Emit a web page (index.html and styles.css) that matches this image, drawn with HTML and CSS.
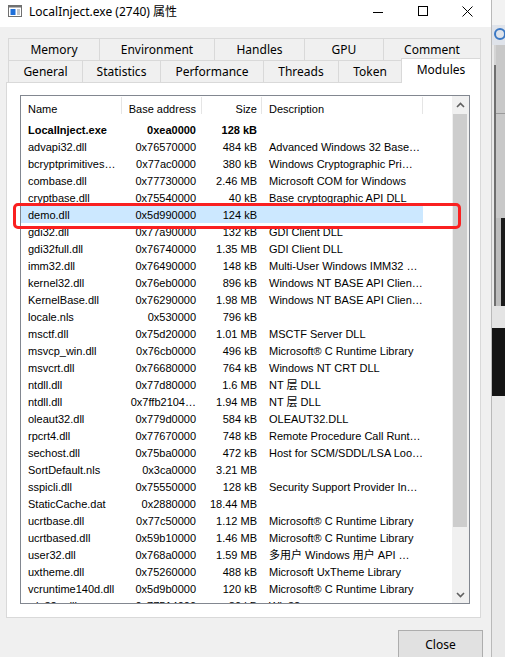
FILE: index.html
```html
<!DOCTYPE html>
<html>
<head>
<meta charset="utf-8">
<title>LocalInject.exe (2740) 属性</title>
<link rel="stylesheet" href="styles.css">
</head>
<body>
<div class="window">
  <div class="titlebar">
    <svg class="app-icon" width="14" height="12" viewBox="0 0 14 12">
      <rect x="0.5" y="0.5" width="13" height="11" fill="#fff" stroke="#707070"/>
      <rect x="1" y="1" width="12" height="1.5" fill="#707070"/>
      <rect x="2.5" y="4" width="5" height="6" fill="#1e6fd9"/>
      <line x1="9" y1="5" x2="12" y2="5" stroke="#8a8a8a"/>
      <line x1="9" y1="7" x2="12" y2="7" stroke="#8a8a8a"/>
      <line x1="9" y1="9" x2="12" y2="9" stroke="#8a8a8a"/>
    </svg>
    <div class="title">LocalInject.exe (2740) 属性</div>
    <div class="spacer"></div>
    <div class="ctrl"><svg width="10" height="10" viewBox="0 0 10 10"><line x1="0" y1="6.5" x2="10" y2="6.5" stroke="#000"/></svg></div>
    <div class="ctrl"><svg width="10" height="10" viewBox="0 0 10 10"><rect x="0.5" y="0.5" width="9" height="9" fill="none" stroke="#000"/></svg></div>
    <div class="ctrl"><svg width="11" height="11" viewBox="0 0 11 11"><path d="M0.5 0.5 L10.5 10.5 M10.5 0.5 L0.5 10.5" stroke="#000" stroke-width="1"/></svg></div>
  </div>
  <div class="client">
    <div class="tabs">
      <div class="tabrow">
        <div class="tab w91">Memory</div>
        <div class="tab w115">Environment</div>
        <div class="tab w90">Handles</div>
        <div class="tab w79">GPU</div>
        <div class="tab w98 last">Comment</div>
      </div>
      <div class="tabrow">
        <div class="tab w74">General</div>
        <div class="tab w78">Statistics</div>
        <div class="tab w103">Performance</div>
        <div class="tab w75">Threads</div>
        <div class="tab w63">Token</div>
        <div class="tab w80 last selected">Modules</div>
      </div>
    </div>
    <div class="panel">
      <div class="list">
        <div class="listmain">
          <div class="header">
            <div class="hc c-name">Name</div>
            <div class="hc c-base">Base address</div>
            <div class="hc c-size">Size</div>
            <div class="hc c-desc">Description</div>
          </div>
          <div class="rows">
            <div class="row bold"><div class="c-name">LocalInject.exe</div><div class="c-base">0xea0000</div><div class="c-size">128 kB</div><div class="c-desc"></div></div>
            <div class="row"><div class="c-name">advapi32.dll</div><div class="c-base">0x76570000</div><div class="c-size">484 kB</div><div class="c-desc">Advanced Windows 32 Base…</div></div>
            <div class="row"><div class="c-name">bcryptprimitives…</div><div class="c-base">0x77ac0000</div><div class="c-size">380 kB</div><div class="c-desc">Windows Cryptographic Pri…</div></div>
            <div class="row"><div class="c-name">combase.dll</div><div class="c-base">0x77730000</div><div class="c-size">2.46 MB</div><div class="c-desc">Microsoft COM for Windows</div></div>
            <div class="row"><div class="c-name">cryptbase.dll</div><div class="c-base">0x75540000</div><div class="c-size">40 kB</div><div class="c-desc">Base cryptographic API DLL</div></div>
            <div class="row selected"><div class="c-name">demo.dll</div><div class="c-base">0x5d990000</div><div class="c-size">124 kB</div><div class="c-desc"></div></div>
            <div class="row"><div class="c-name">gdi32.dll</div><div class="c-base">0x77a90000</div><div class="c-size">132 kB</div><div class="c-desc">GDI Client DLL</div></div>
            <div class="row"><div class="c-name">gdi32full.dll</div><div class="c-base">0x76740000</div><div class="c-size">1.35 MB</div><div class="c-desc">GDI Client DLL</div></div>
            <div class="row"><div class="c-name">imm32.dll</div><div class="c-base">0x76490000</div><div class="c-size">148 kB</div><div class="c-desc">Multi-User Windows IMM32 …</div></div>
            <div class="row"><div class="c-name">kernel32.dll</div><div class="c-base">0x76eb0000</div><div class="c-size">896 kB</div><div class="c-desc">Windows NT BASE API Clien…</div></div>
            <div class="row"><div class="c-name">KernelBase.dll</div><div class="c-base">0x76290000</div><div class="c-size">1.98 MB</div><div class="c-desc">Windows NT BASE API Clien…</div></div>
            <div class="row"><div class="c-name">locale.nls</div><div class="c-base">0x530000</div><div class="c-size">796 kB</div><div class="c-desc"></div></div>
            <div class="row"><div class="c-name">msctf.dll</div><div class="c-base">0x75d20000</div><div class="c-size">1.01 MB</div><div class="c-desc">MSCTF Server DLL</div></div>
            <div class="row"><div class="c-name">msvcp_win.dll</div><div class="c-base">0x76cb0000</div><div class="c-size">496 kB</div><div class="c-desc">Microsoft® C Runtime Library</div></div>
            <div class="row"><div class="c-name">msvcrt.dll</div><div class="c-base">0x76680000</div><div class="c-size">764 kB</div><div class="c-desc">Windows NT CRT DLL</div></div>
            <div class="row"><div class="c-name">ntdll.dll</div><div class="c-base">0x77d80000</div><div class="c-size">1.6 MB</div><div class="c-desc">NT 层 DLL</div></div>
            <div class="row"><div class="c-name">ntdll.dll</div><div class="c-base">0x7ffb2104…</div><div class="c-size">1.94 MB</div><div class="c-desc">NT 层 DLL</div></div>
            <div class="row"><div class="c-name">oleaut32.dll</div><div class="c-base">0x779d0000</div><div class="c-size">584 kB</div><div class="c-desc">OLEAUT32.DLL</div></div>
            <div class="row"><div class="c-name">rpcrt4.dll</div><div class="c-base">0x77670000</div><div class="c-size">748 kB</div><div class="c-desc">Remote Procedure Call Runt…</div></div>
            <div class="row"><div class="c-name">sechost.dll</div><div class="c-base">0x75ba0000</div><div class="c-size">472 kB</div><div class="c-desc">Host for SCM/SDDL/LSA Loo…</div></div>
            <div class="row"><div class="c-name">SortDefault.nls</div><div class="c-base">0x3ca0000</div><div class="c-size">3.21 MB</div><div class="c-desc"></div></div>
            <div class="row"><div class="c-name">sspicli.dll</div><div class="c-base">0x75550000</div><div class="c-size">128 kB</div><div class="c-desc">Security Support Provider In…</div></div>
            <div class="row"><div class="c-name">StaticCache.dat</div><div class="c-base">0x2880000</div><div class="c-size">18.44 MB</div><div class="c-desc"></div></div>
            <div class="row"><div class="c-name">ucrtbase.dll</div><div class="c-base">0x77c50000</div><div class="c-size">1.12 MB</div><div class="c-desc">Microsoft® C Runtime Library</div></div>
            <div class="row"><div class="c-name">ucrtbased.dll</div><div class="c-base">0x59b10000</div><div class="c-size">1.46 MB</div><div class="c-desc">Microsoft® C Runtime Library</div></div>
            <div class="row"><div class="c-name">user32.dll</div><div class="c-base">0x768a0000</div><div class="c-size">1.59 MB</div><div class="c-desc">多用户 Windows 用户 API …</div></div>
            <div class="row"><div class="c-name">uxtheme.dll</div><div class="c-base">0x75260000</div><div class="c-size">488 kB</div><div class="c-desc">Microsoft UxTheme Library</div></div>
            <div class="row"><div class="c-name">vcruntime140d.dll</div><div class="c-base">0x5d9b0000</div><div class="c-size">120 kB</div><div class="c-desc">Microsoft® C Runtime Library</div></div>
            <div class="row"><div class="c-name">win32u.dll</div><div class="c-base">0x77514000</div><div class="c-size">80 kB</div><div class="c-desc">Win32u</div></div>
          </div>
        </div>
        <div class="vscroll">
          <div class="arrow"><svg width="9" height="6" viewBox="0 0 9 6"><polyline points="1,5 4.5,1.5 8,5" fill="none" stroke="#606060" stroke-width="1.6"/></svg></div>
          <div class="track"><div class="thumb"></div></div>
          <div class="arrow"><svg width="9" height="6" viewBox="0 0 9 6"><polyline points="1,1 4.5,4.5 8,1" fill="none" stroke="#606060" stroke-width="1.6"/></svg></div>
        </div>
      </div>
    </div>
    <div class="footer">
      <div class="btn">Close</div>
    </div>
  </div>
  <div class="mark"></div>
</div>
<div class="desk">
  <div class="desk-top"></div>
  <div class="desk-band"><div class="desk-ring"></div></div>
  <div class="desk-mid">
    <div class="dm-a"></div>
    <div class="dm-b"></div>
    <div class="dm-c"><div class="dm-c1"></div><div class="dm-c2"></div></div>
  </div>
  <div class="desk-grip"></div>
  <div class="desk-black"></div>
  <div class="desk-bottom"></div>
</div>
</body>
</html>
```
FILE: styles.css
```css
* { box-sizing: border-box; }
html, body { margin: 0; padding: 0; }
body {
  width: 505px;
  height: 657px;
  overflow: hidden;
  display: flex;
  background: #f0f0f0;
  font-family: "Noto Sans", "Noto Sans CJK SC", sans-serif;
  color: #000;
}

.window {
  width: 491px;
  height: 657px;
  flex: none;
  display: flex;
  flex-direction: column;
  position: relative;
  background: #f0f0f0;
  overflow: hidden;
}

.titlebar {
  height: 27px;
  flex: none;
  background: #fff;
  display: flex;
  align-items: flex-start;
}
.app-icon { margin: 5px 0 0 8px; flex: none; }
.title {
  margin: 3px 0 0 7px;
  font-size: 12px;
  line-height: 18px;
  white-space: nowrap;
}
.spacer { flex: 1; }
.ctrl {
  width: 45px;
  height: 27px;
  display: flex;
  justify-content: center;
  padding-top: 6px;
}
.ctrl:last-child { margin-right: 1px; }

.client {
  flex: 1;
  min-height: 0;
  padding: 11px 10px 0 7px;
  display: flex;
  flex-direction: column;
}

.tabs { display: flex; flex-direction: column; flex: none; margin-left: 1px; }
.tabrow { display: flex; height: 22px; }
.tab {
  border-top: 1px solid #d9d9d9;
  border-left: 1px solid #d9d9d9;
  background: #f0f0f0;
  font-size: 12px;
  display: flex;
  align-items: center;
  justify-content: center;
  white-space: nowrap;
  padding-bottom: 1px;
}
.tab.last { border-right: 1px solid #d9d9d9; }
.tab.selected {
  background: #fff;
  margin-top: -2px;
  margin-bottom: -1px;
  position: relative;
  z-index: 2;
  padding-bottom: 3px;
}
.w63 { width: 63px; } .w74 { width: 74px; } .w75 { width: 75px; }
.w78 { width: 78px; } .w79 { width: 79px; } .w80 { width: 80px; }
.w90 { width: 90px; } .w91 { width: 91px; } .w98 { width: 98px; }
.w103 { width: 103px; } .w115 { width: 115px; }

.panel {
  flex: none;
  height: 536px;
  margin-left: -1px;
  background: #fff;
  border: 1px solid #d9d9d9;
  padding: 12px 10px 13px 13px;
}
.list {
  height: 509px;
  border: 1px solid #828790;
  display: flex;
  background: #fff;
}
.listmain { flex: 1; min-width: 0; overflow: hidden; }

.header { display: flex; height: 25px; }
.hc {
  font-size: 11px;
  font-family: "Liberation Sans", "Noto Sans CJK SC", sans-serif;
  display: flex;
  align-items: center;
  padding-top: 1px;
  background: linear-gradient(#e5e5e5, #e5e5e5) no-repeat right 1px / 1px 17px;
  white-space: nowrap;
}
.c-name { width: 101px; padding-left: 7px; }
.c-base { width: 80px; padding-right: 6px; justify-content: flex-end; text-align: right; }
.c-size { width: 60px; padding-right: 5px; justify-content: flex-end; text-align: right; }
.c-desc { width: 161px; padding-left: 7px; }

.rows { width: 402px; display: flex; flex-direction: column; }
.row {
  display: flex;
  height: 17px;
  flex: none;
  font-size: 11px;
  font-family: "Liberation Sans", "Noto Sans CJK SC", sans-serif;
  white-space: nowrap;
}
.row > div { overflow: hidden; line-height: 16px; padding-top: 1px; height: 17px; }
.row.bold { font-weight: bold; }
.row.selected { background: #cce8ff; }

.vscroll {
  width: 17px;
  flex: none;
  background: #f0f0f0;
  display: flex;
  flex-direction: column;
}
.arrow {
  height: 17px;
  flex: none;
  display: flex;
  align-items: center;
  justify-content: center;
}
.track { flex: 1; padding: 1px 2px 0 1px; }
.thumb { height: 413px; background: #cdcdcd; }

.footer {
  flex: none;
  margin-top: 12px;
  margin-right: -2px;
  display: flex;
  justify-content: flex-end;
}
.btn {
  width: 85px;
  height: 28px;
  background: #e1e1e1;
  border: 1px solid #adadad;
  font-size: 12px;
  display: flex;
  align-items: center;
  justify-content: center;
}

.mark {
  position: absolute;
  left: 13px;
  top: 203px;
  width: 448px;
  height: 26px;
  border: 3px solid #fa2020;
  border-radius: 5px;
}

.desk {
  flex: 1;
  display: flex;
  flex-direction: column;
  border-left: 1px solid #b9b9b9;
}
.desk-top { height: 25px; background: #f2f2f2; }
.desk-band { height: 20px; background: #dfe3ea; padding: 3px 0 0 2px; }
.desk-ring {
  width: 12px;
  height: 12px;
  border: 2px solid #3b78c4;
  border-radius: 50%;
}
.desk-mid {
  flex: 1;
  display: flex;
  background: #d4d4d4;
}
.dm-a { width: 2px; background: #eaeaea; }
.dm-b { width: 2px; background: #6e6e6e; margin-top: 20px; }
.dm-c { flex: 1; display: flex; flex-direction: column; background: #c8c8c8; }
.dm-c1 { height: 105px; border-top: 1px solid #9a9a9a; margin-top: 68px; }
.dm-c2 { flex: 1; border-left: 5px solid #bdbdbd; background: #1b1b1b; }
.desk-grip { height: 22px; background: #e4e4e4; }
.desk-black { height: 68px; background: #141414; }
.desk-bottom { flex: 1; background: #e9e9e9; }
```
